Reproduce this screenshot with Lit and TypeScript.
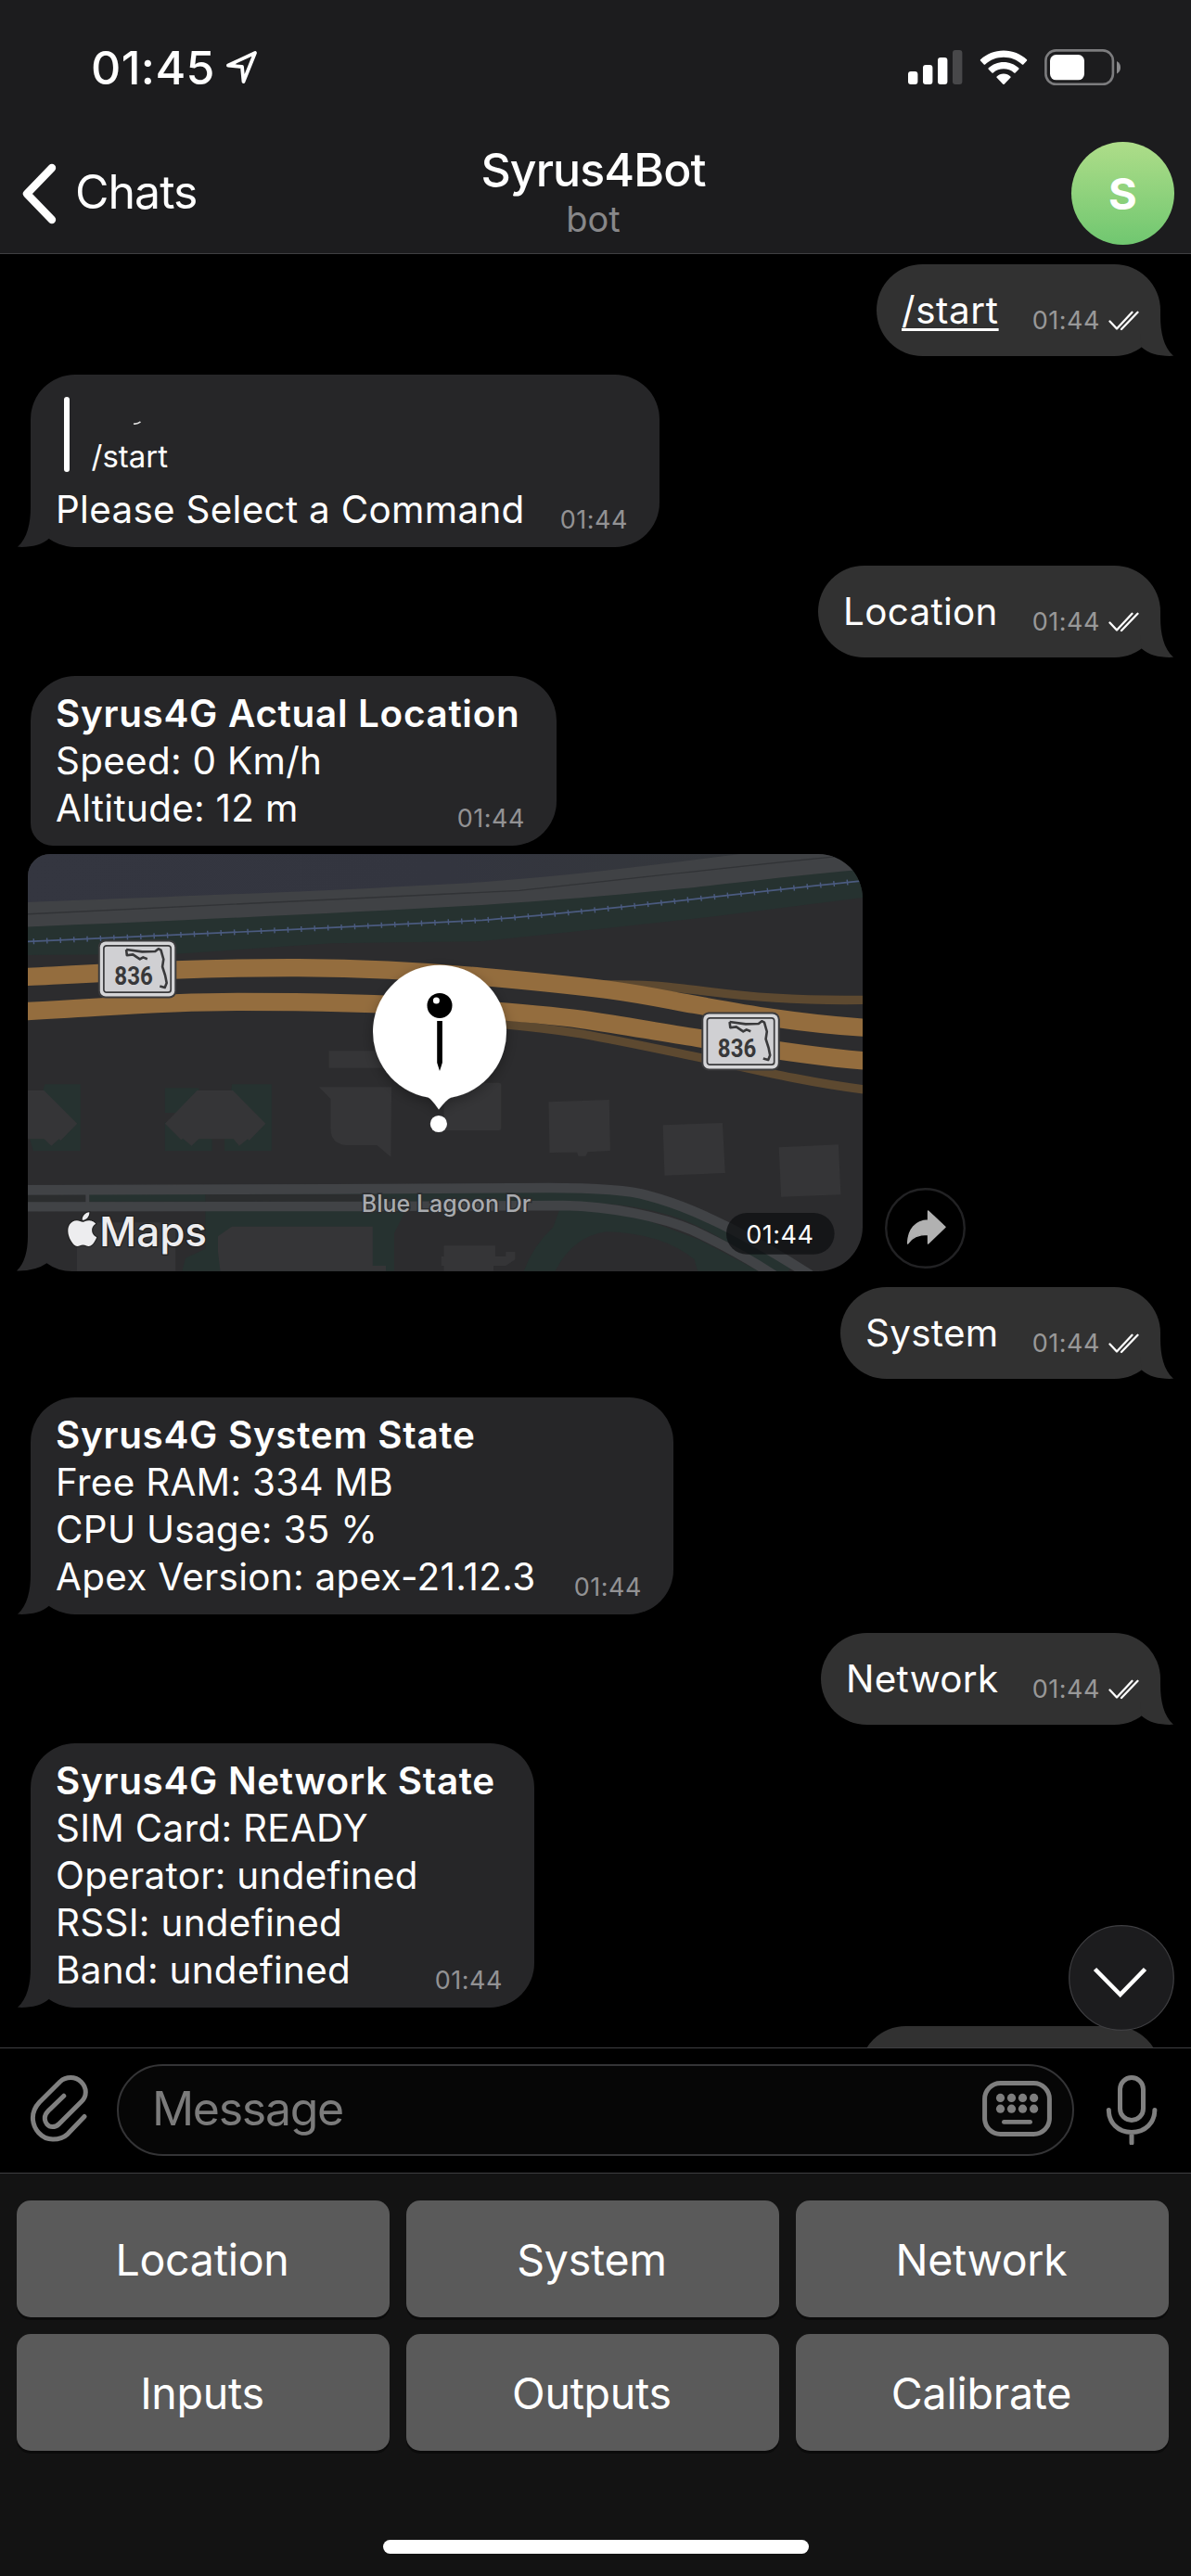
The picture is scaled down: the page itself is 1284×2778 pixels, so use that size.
import { LitElement, html, css, svg, nothing } from "lit";
import { customElement, property } from "lit/decorators.js";
import { classMap } from "lit/directives/class-map.js";
import { styleMap } from "lit/directives/style-map.js";

type Message = {
  out?: boolean;
  lines?: string[];
  title?: string;
  reply?: string;
  link?: boolean;
  grouped?: boolean;
  map?: boolean;
  width: number;
};

const TIME = "01:44";

const MESSAGES: Message[] = [
  { out: true, lines: ["/start"], link: true, width: 306 },
  { lines: ["Please Select a Command"], reply: "/start", width: 678 },
  { out: true, lines: ["Location"], width: 369 },
  { title: "Syrus4G Actual Location", lines: ["Speed: 0 Km/h", "Altitude: 12 m"], grouped: true, width: 567 },
  { map: true, width: 912 },
  { out: true, lines: ["System"], width: 345 },
  { title: "Syrus4G System State", lines: ["Free RAM: 334 MB", "CPU Usage: 35 %", "Apex Version: apex-21.12.3"], width: 693 },
  { out: true, lines: ["Network"], width: 366 },
  {
    title: "Syrus4G Network State",
    lines: ["SIM Card: READY", "Operator: undefined", "RSSI: undefined", "Band: undefined"],
    width: 543,
  },
  { out: true, lines: [], width: 324 },
];

const KEYS = ["Location", "System", "Network", "Inputs", "Outputs", "Calibrate"];

@customElement("status-bar")
class StatusBar extends LitElement {
  static styles = css`
    :host { display: flex; align-items: center; height: 146px; padding: 0 75px 0 98px; color: #fff; }
    .clock { font-size: 50px; font-weight: 550; letter-spacing: 0.4px; line-height: 60px; }
    .arrow { margin-left: 11px; }
    .icons { display: flex; align-items: center; margin-left: auto; }
    .wifi { margin-left: 18px; }
    .battery { margin-left: 18px; }
  `;
  render() {
    return html`
      <span class="clock">01:45</span>
      <svg class="arrow" width="36" height="38" viewBox="0 0 36 38" fill="none" stroke="#fff" stroke-width="3.8" stroke-linejoin="round">
        <path d="M3 16.5 L32 3 L19.5 34 L18 18 Z" />
      </svg>
      <div class="icons">
        <svg width="60" height="38" viewBox="0 0 60 38" fill="#fff">
          <rect x="1" y="23" width="10.4" height="14" rx="3" />
          <rect x="17" y="16" width="10.4" height="21" rx="3" />
          <rect x="33" y="8" width="10.4" height="29" rx="3" />
          <rect x="49" y="0" width="10.4" height="37" rx="3" fill="#48484a" />
        </svg>
        <svg class="wifi" width="52" height="38" viewBox="0 0 52 38" fill="#fff">
          <path d="M26 0.4 C35.5 0.4 44.5 4 51 10.2 Q51.6 10.9 51 11.6 L47.3 15.4 Q46.6 16 45.9 15.4 C40.5 10.4 33.5 7.7 26 7.7 S11.5 10.4 6.1 15.4 Q5.4 16 4.7 15.4 L1 11.6 Q0.4 10.9 1 10.2 C7.5 4 16.5 0.4 26 0.4Z" />
          <path d="M26 13 C32.2 13 37.9 15.3 42.3 19.3 Q43 20 42.3 20.7 L38.6 24.5 Q37.9 25.1 37.2 24.5 C34.1 21.7 30.2 20.3 26 20.3 S17.9 21.7 14.8 24.5 Q14.1 25.1 13.4 24.5 L9.7 20.7 Q9 20 9.7 19.3 C14.1 15.3 19.8 13 26 13Z" />
          <path d="M26 25.6 C28.9 25.6 31.4 26.7 33.4 28.4 Q34 29.1 33.4 29.8 L26.7 36.7 Q26 37.3 25.3 36.7 L18.6 29.8 Q18 29.1 18.6 28.4 C20.6 26.7 23.1 25.6 26 25.6Z" />
        </svg>
        <svg class="battery" width="83" height="40" viewBox="0 0 83 40">
          <rect x="1.4" y="1.4" width="72.5" height="36.4" rx="11" fill="none" stroke="#7c7c7e" stroke-width="2.6" />
          <rect x="6" y="6" width="37" height="27.3" rx="6.5" fill="#fff" />
          <path d="M78 13 Q82 15 82 19.7 T78 26.5Z" fill="#8a8a8c" />
        </svg>
      </div>
    `;
  }
}

@customElement("chat-header")
class ChatHeader extends LitElement {
  static styles = css`
    :host { display: grid; grid-template-columns: 1fr auto 1fr; align-items: center; height: 127px; padding: 0 18px 2px 22px; box-sizing: border-box; color: #fff; }
    .back { display: flex; align-items: center; gap: 19px; }
    .label { font-size: 50px; letter-spacing: -1px; line-height: 60px; margin-top: -3px; }
    .who { text-align: center; padding-top: 2px; margin-left: -9px; }
    .name { font-size: 50px; font-weight: 550; line-height: 53px; letter-spacing: -0.9px; }
    .kind { font-size: 38px; line-height: 53px; color: #88888a; }
    .avatar { justify-self: end; width: 111px; height: 111px; border-radius: 50%; background: linear-gradient(#aedd89, #70c770); display: flex; align-items: center; justify-content: center; font-size: 47px; font-weight: 650; }
  `;
  render() {
    return html`
      <div class="back">
        <svg width="40" height="68" viewBox="0 0 40 68" fill="none" stroke="#fff" stroke-width="8.4" stroke-linecap="round" stroke-linejoin="round">
          <path d="M34 6 L7 34 L34 62" />
        </svg>
        <span class="label">Chats</span>
      </div>
      <div class="who">
        <div class="name">Syrus4Bot</div>
        <div class="kind">bot</div>
      </div>
      <div class="avatar">S</div>
    `;
  }
}

const roadSign = (x: number, y: number) => svg`
  <g transform="translate(${x} ${y})">
    <rect x="-1.5" y="-1.5" width="84.5" height="63" rx="8" fill="#3b3b3d" />
    <rect x="0.5" y="0.5" width="80.5" height="59" rx="6" fill="#d6d6d8" />
    <rect x="4.6" y="4.8" width="72.3" height="50.4" rx="3" fill="#d0d0d3" stroke="#3a3a3c" stroke-width="1.7" />
    <path d="M28.8 9 L46 11.4 L60 11 L63.5 8.2 L66.2 9.6 L69 19.5 L67.8 27.5 L70.8 37 L72.4 45 L70.4 50 L65 48.4 M28.8 9 L29.5 15.2 L36 14.4 L43.5 19.4 L47 17.4 L51.5 19.2"
      fill="none" stroke="#3a3a3c" stroke-width="2.6" stroke-linejoin="round" />
    <text x="16" y="47" class="route" textLength="41.5" lengthAdjust="spacingAndGlyphs">836</text>
  </g>`;

@customElement("map-preview")
class MapPreview extends LitElement {
  static styles = css`
    :host { display: block; width: 912px; height: 450px; letter-spacing: 0; }
    svg { display: block; }
    .route { font: 700 28.5px Roboto, sans-serif; fill: #38383a; }
    .street { font-size: 25px; font-weight: 500; fill: #a9abaf; stroke: #2a2c2e; stroke-width: 3px; paint-order: stroke; }
    .brand { font-size: 44px; font-weight: 500; fill: #ededef; stroke: #222; stroke-width: 2.5px; paint-order: stroke; }
    .time { font-size: 27px; letter-spacing: 0.5px; fill: #fff; }
  `;
  render() {
    return html`
      <svg width="912" height="450" viewBox="0 0 912 450">
        <defs>
          <clipPath id="bubble">
            <path d="M36 0 H864 A48 48 0 0 1 912 48 V402 A48 48 0 0 1 864 450 H60 Q44 450 32.4 441.3 Q20 450 0 449.5 Q12 438 12 412 V24 A24 24 0 0 1 36 0Z" />
          </clipPath>
          <linearGradient id="water"><stop offset="0" stop-color="#343640" /><stop offset="0.55" stop-color="#33353f" /><stop offset="1" stop-color="#35383b" /></linearGradient>
          <filter id="shade" x="-30%" y="-30%" width="160%" height="160%"><feDropShadow dx="0" dy="4" stdDeviation="7" flood-color="#000" flood-opacity="0.3" /></filter>
        </defs>
        <g clip-path="url(#bubble)">
          <rect width="912" height="450" fill="#2c2c2e" />
          <g transform="scale(0.357143 0.333333) translate(-50.4 -63)">
            <path d="M50 60 H2400 L1568 160 L50 240Z" fill="url(#water)" />
            <path d="M50 280 L1568 210 L2610 100 V203 L2156 265 L1856 300 L1456 345 L1000 352 L530 386 L50 390Z" fill="#263230" />
            <path d="M50 220 C700 194 1100 176 1456 154 C1750 130 2000 95 2256 60 H2610 V113 C2400 132 2200 160 2056 175 C1800 203 1600 218 1456 228 C1000 256 500 280 50 300Z" fill="#404245" />
            <path d="M50 259 C600 233 1100 208 1568 181 C1850 150 2200 105 2610 62" fill="none" stroke="#313336" stroke-width="4" />
            <g fill="none" stroke="#4b5b80">
              <path d="M50 348 C500 327 1000 302 1456 277 C1800 250 2200 193 2610 149" stroke-width="5" />
              <path d="M60 347.5 C500 327 1000 302 1456 277 C1800 250 2200 193 2610 149" stroke-width="18" stroke-dasharray="4 36.4" />
            </g>
            <g fill="none" stroke="#5d4930" stroke-width="28">
              <path d="M1800 486 C2000 482 2040 498 2116 505 C2260 525 2400 538 2610 535" />
              <path d="M1440 606 C1560 618 1650 626 1756 645 C1900 673 2000 697 2106 720 C2250 753 2420 800 2610 825" />
            </g>
            <g fill="none" stroke="#946d3e" stroke-width="58">
              <path d="M50 462 C350 446 600 430 900 431 C1150 433 1300 444 1456 460 C1650 478 1740 489 1836 502 C1960 520 2030 538 2096 550 C2250 580 2400 609 2610 625" />
              <path d="M50 573 C300 562 450 541 720 541 C950 541 1200 549 1340 558 C1500 570 1640 581 1756 598 C1900 620 1990 640 2106 658 C2250 682 2420 715 2610 732" />
            </g>
            <path d="M135 808 H243 V1023 H100 L90 985Z M498 820 H600 V900 H498Z M498 930 V1023 H640 V980Z M700 808 H820 V1023 H678 V980Z" fill="#263230" />
            <g fill="#353537">
              <path d="M50 828 H133 L233 935 L183 990 L178 985 L155 1007 L133 985 H50Z" />
              <path d="M595 828 H703 L802 935 L752 990 L748 985 L722 1007 L705 985 H600 L578 1007 L552 983 L547 988 L498 935Z" />
              <path d="M993 700 H1180 V755 H993Z" />
              <path d="M963 817 H1182 L1180 1043 L1138 1005 H1045 Q998 1000 998 950 V855Z" />
              <path d="M1340 803 H1506 Q1513 803 1513 811 V949 Q1513 957 1506 957 H1340Z" />
              <path d="M1656 865 L1839 858 L1842 1023 L1774 1027 L1768 1040 H1746 L1742 1028 L1659 1029Z" />
              <path d="M2001 940 L2181 933 L2189 1095 L2006 1103Z" />
              <path d="M2351 1012 L2531 1003 L2538 1165 L2358 1172Z" />
            </g>
            <path d="M620 1215 H1225 L1190 1290 V1412 H550 L560 1370 L620 1340Z M1690 1210 H1800 L1960 1250 L2110 1310 L2290 1412 H2106 L2096 1375 Q2000 1290 1830 1285 Q1730 1300 1676 1412 H1581 Q1610 1330 1670 1270Z" fill="#263230" />
            <path d="M270 1165 H1656 C1800 1165 1950 1175 2080 1230 C2180 1275 2280 1350 2380 1412" fill="none" stroke="#263230" stroke-width="44" />
            <path d="M620 1164 H1090 V1188 H620Z M50 1164 H258 V1190 H50Z" fill="#2b2d2e" />
            <g fill="#353537">
              <path d="M232 1255 H530 V1412 H232Z" />
              <path d="M658 1300 L700 1268 H1125 V1395 H1165 V1412 H665 L658 1350Z" />
              <path d="M1340 1330 H1495 V1365 H1527 V1350 H1555 V1375 L1527 1395 H1490 V1412 H1340 V1395 H1332 V1365 H1340Z" />
            </g>
            <g fill="none" stroke="#414346">
              <path d="M50 1150 L1000 1147 L1656 1143 C1800 1143 1900 1150 1956 1168 C2060 1198 2130 1235 2206 1275 C2290 1322 2350 1360 2445 1425" stroke-width="32" />
              <path d="M50 1204 L1100 1203 L1700 1200 C1850 1203 2000 1238 2090 1280 C2180 1325 2250 1365 2335 1425" stroke-width="31" />
              <path d="M264 1155 V1200" stroke-width="11" />
            </g>
          </g>
          ${roadSign(89.3, 94)}
          ${roadSign(739.8, 172)}
          <text class="street" x="371.8" y="385.7">Blue Lagoon Dr</text>
          <g transform="translate(51.8 386.3) scale(1.58 1.53)">
            <path fill="#ededef" stroke="#222" stroke-width="1.4" paint-order="stroke"
              d="M12.15 6.9c-.95 0-2.42-1.08-3.96-1.04-2.04.03-3.91 1.18-4.96 3.01-2.12 3.68-.55 9.1 1.52 12.09 1.01 1.45 2.2 3.09 3.79 3.04 1.52-.07 2.09-.99 3.93-.99 1.83 0 2.35.99 3.96.95 1.64-.03 2.68-1.48 3.68-2.95 1.16-1.69 1.64-3.33 1.66-3.42-.04-.01-3.18-1.22-3.22-4.86-.03-3.04 2.48-4.49 2.6-4.56-1.43-2.09-3.62-2.32-4.39-2.38-2-.16-3.68 1.09-4.61 1.09zM15.53 3.83c.84-1.01 1.4-2.43 1.25-3.83-1.21.05-2.66.8-3.53 1.82-.78.9-1.45 2.34-1.27 3.71 1.34.1 2.71-.69 3.55-1.7" />
          </g>
          <text class="brand" x="89" y="423">Maps</text>
        </g>
        <g filter="url(#shade)">
          <path fill="#fff" d="M456 119.7 A72 72 0 0 1 468 262.7 Q464 264 455 275.5 Q447 264 443.5 262.6 A72 72 0 0 1 456 119.7Z" />
        </g>
        <circle cx="454.9" cy="291" r="9.1" fill="#fff" />
        <circle cx="456" cy="163.4" r="13.5" fill="#000" />
        <circle cx="452.4" cy="158" r="3.5" fill="#fff" />
        <path d="M453.2 180 H458.9 V225 L456 234 L453.2 225Z" fill="#000" />
        <rect x="765" y="387" width="116.6" height="44.7" rx="22.3" fill="#0e0f11" fill-opacity="0.75" />
        <text class="time" x="786.3" y="419.8">${TIME}</text>
      </svg>
    `;
  }
}

@customElement("chat-message")
class ChatMessage extends LitElement {
  @property({ attribute: false }) message!: Message;

  static styles = css`
    :host { display: flex; color: #fff; font-size: 40.4px; line-height: 51px; letter-spacing: 0.3px; }
    .bubble { position: relative; box-sizing: border-box; min-height: 99px; padding: 15px 34px 15px 27px; border-radius: 48px; background: #262628; display: flex; flex-direction: column; justify-content: center; }
    .out { margin-left: auto; margin-right: 33px; padding-right: 23px; border-radius: 49.5px; background: #313131; }
    .in { margin-left: 33px; }
    .grouped { border-bottom-left-radius: 24px; }
    .body { display: flex; align-items: flex-end; justify-content: space-between; white-space: nowrap; }
    .bold { font-weight: 600; letter-spacing: 0.7px; white-space: nowrap; }
    .link { text-decoration: underline; text-decoration-thickness: 3px; text-underline-offset: 5px; letter-spacing: 0.6px; }
    .meta { display: flex; align-items: center; gap: 9px; margin-bottom: -1.5px; font-size: 27px; line-height: 32px; letter-spacing: 0.5px; color: #929294; }
    .out .meta { color: #989898; }
    .tail { position: absolute; bottom: 0; left: -14px; }
    .out .tail { left: auto; right: -14px; transform: scaleX(-1); }
    .reply { display: flex; gap: 24px; height: 81px; margin: 9px 0 15px 9px; }
    .bar { width: 5.5px; border-radius: 3px; background: #fff; }
    .quote { display: flex; flex-direction: column; justify-content: flex-end; font-size: 33px; line-height: 40px; letter-spacing: 0; margin-bottom: -3px; }
    .mark { display: block; margin: 0 0 13px 43px; }
    .mapline { display: flex; align-items: flex-end; gap: 24px; margin-left: 18px; }
    .share { display: block; margin-bottom: 3px; }
  `;

  renderMap() {
    return html`
      <div class="mapline">
        <map-preview></map-preview>
        <svg class="share" width="87" height="87" viewBox="0 0 87 87">
          <circle cx="43.5" cy="43.5" r="42.3" fill="#000" stroke="#222224" stroke-width="2.4" />
          <path d="M46.6 25 L65 42.3 L46.6 60 V50.3 C36 50.3 29 53 24.6 60 C25 44.5 33 35.6 46.6 35Z" fill="#b1b1b1" stroke="#b1b1b1" stroke-width="1.5" stroke-linejoin="round" />
        </svg>
      </div>
    `;
  }

  render() {
    const m = this.message;
    if (m.map) return this.renderMap();
    const lines = m.lines ?? [];
    return html`
      <div class=${classMap({ bubble: true, out: !!m.out, in: !m.out, grouped: !!m.grouped })} style=${styleMap({ width: `${m.width}px` })}>
        ${m.grouped ? nothing : html`
          <svg class="tail" width="54" height="50" viewBox="0 0 54 50">
            <path d="M14 0 V6 C14 25 10.5 40 0 49.8 C14 50.4 26 48 34.2 40.5 L36 25 V0Z" fill=${m.out ? "#313131" : "#262628"} />
          </svg>`}
        ${m.reply ? html`
          <div class="reply">
            <div class="bar"></div>
            <div class="quote">
              <svg class="mark" width="12" height="6" viewBox="0 0 12 6" fill="none" stroke="#ddd" stroke-width="1.6"><path d="M2 4 Q6 4.6 9.5 1.8" /></svg>
              <span>${m.reply}</span>
            </div>
          </div>` : nothing}
        ${m.title ? html`<div class="bold">${m.title}</div>` : nothing}
        ${lines.length ? html`
          <div class="body">
            <div>
              ${lines.map((l) => html`<div class=${classMap({ link: !!m.link })}>${l}</div>`)}
            </div>
            <div class="meta">
              <span>${TIME}</span>
              ${m.out ? html`
                <svg width="33" height="22" viewBox="0 0 33 22" fill="none" stroke="#fff" stroke-width="2.3" stroke-linecap="round" stroke-linejoin="round">
                  <path d="M1.5 11.5 L9 19.5 L25.5 1.8 M14 20 L31.5 1.8" />
                </svg>` : nothing}
            </div>
          </div>` : nothing}
      </div>
    `;
  }
}

@customElement("message-input")
class MessageInput extends LitElement {
  static styles = css`
    :host { display: flex; align-items: center; box-sizing: border-box; height: 136px; padding: 0 34px 1px 30px; border-top: 1px solid #3f3f42; border-bottom: 1px solid #3f3f42; background: #000; }
    .field { flex: 1; display: flex; align-items: center; justify-content: space-between; box-sizing: border-box; height: 99px; margin: 0 32px 0 28px; padding: 0 22px 0 36px; border: 2.5px solid #343436; border-radius: 50px; background: #060606; }
    .hint { font-size: 50px; letter-spacing: -1.3px; line-height: 60px; color: #7b7b7b; margin-top: -4px; }
    .keys { margin-top: -3px; }
    .clip, .mic { margin-top: -3px; }
  `;
  render() {
    return html`
      <svg class="clip" width="68" height="78" viewBox="0 0 68 78" fill="none" stroke="#808080" stroke-width="5" stroke-linecap="round" stroke-linejoin="round">
        <path d="M61 47.5 L43 66.3 C38.5 70.5 33 72 27 72 C15 72 5.4 61 5.4 48.7 C5.4 42 8 37 12.6 32 L34.7 10 C38 7 42 5.6 46.2 5.6 C55 5.6 62.3 13 62.3 21.3 C62.3 25.5 61 28.3 57.7 31.6 L33.5 55.6 C31.3 57.8 29.2 58.6 26.5 58.6 C22 58.6 18.3 54.5 18.3 49 C18.3 46 19.5 44 22.2 41.3 L38.8 25.2" />
      </svg>
      <div class="field">
        <span class="hint">Message</span>
        <svg class="keys" width="75" height="60" viewBox="0 0 75 60">
          <rect x="2.6" y="2.6" width="69.8" height="54.8" rx="17" fill="none" stroke="#7e7e7e" stroke-width="5" />
          <g fill="#7e7e7e">
            ${[18.4, 30.2].map((y) => [19.5, 31.5, 43.5, 55.6].map((x) => svg`<circle cx=${x} cy=${y} r="4.6" />`))}
            <rect x="21" y="42" width="33" height="4.8" rx="2.4" />
          </g>
        </svg>
      </div>
      <svg class="mic" width="60" height="78" viewBox="0 0 60 78" fill="none" stroke="#808080" stroke-width="5" stroke-linecap="round">
        <rect x="17.5" y="5.5" width="25" height="46" rx="12.5" />
        <path d="M5.3 40.5 C5.3 54 15 64.5 30 64.5 S54.9 54 54.9 40.5 M30 65 V76" />
      </svg>
    `;
  }
}

@customElement("app-root")
class AppRoot extends LitElement {
  static styles = css`
    :host { display: flex; flex-direction: column; width: 1284px; height: 2778px; overflow: hidden; background: #000; font-family: Inter, "Liberation Sans", sans-serif; }
    .top { box-sizing: border-box; height: 274px; background: #1c1c1e; border-bottom: 1px solid #3f3f42; }
    .chat { position: relative; box-sizing: border-box; height: 1934px; padding-top: 11px; overflow: hidden; display: flex; flex-direction: column; gap: 20px; }
    .tight { margin-top: -11px; }
    .after { margin-top: -3px; }
    .down { position: absolute; right: 18px; bottom: 18px; }
    .panel { flex: 1; display: flex; flex-direction: column; justify-content: space-between; align-items: center; background: #131313; padding: 29px 24px 24px 18px; }
    .grid { align-self: stretch; display: grid; grid-template-columns: repeat(3, 402px); grid-auto-rows: 126px; gap: 18px; }
    .key { display: flex; align-items: center; justify-content: center; padding: 1px 2px 0 0; box-sizing: border-box; border-radius: 15px; background: #5a5a5a; box-shadow: 0 3px 0 #0b0b0b; color: #fff; font-size: 46.5px; letter-spacing: -0.25px; }
    .home { width: 459px; height: 15px; margin-left: 7px; border-radius: 8px; background: #fff; }
  `;
  render() {
    return html`
      <div class="top">
        <status-bar></status-bar>
        <chat-header></chat-header>
      </div>
      <div class="chat">
        ${MESSAGES.map((m, i) => html`
          <chat-message
            class=${classMap({ tight: !!m.map, after: !!MESSAGES[i - 1]?.map })}
            .message=${m}
          ></chat-message>`)}
        <svg class="down" width="114" height="114" viewBox="0 0 114 114">
          <circle cx="57" cy="57" r="56.3" fill="#1c1c1e" stroke="#3f3f42" stroke-width="1.2" />
          <path d="M28.5 47.5 L55.7 75 L82.5 47.5" fill="none" stroke="#fff" stroke-width="4.6" />
        </svg>
      </div>
      <message-input></message-input>
      <div class="panel">
        <div class="grid">${KEYS.map((k) => html`<div class="key">${k}</div>`)}</div>
        <div class="home"></div>
      </div>
    `;
  }
}
